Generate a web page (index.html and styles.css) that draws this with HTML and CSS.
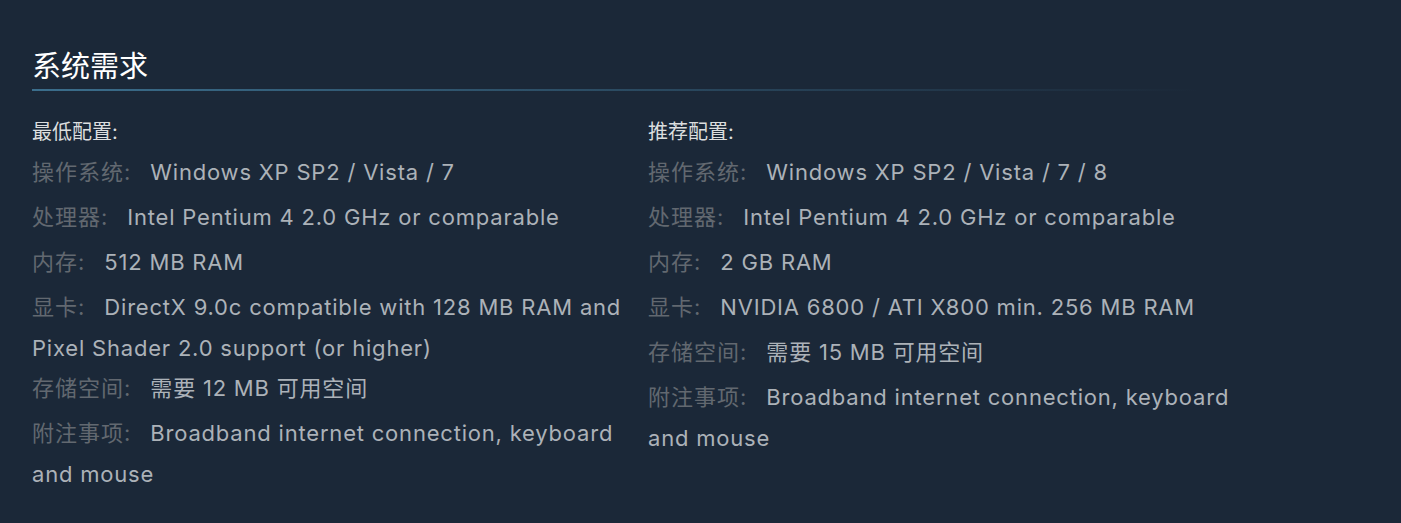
FILE: index.html
```html
<!DOCTYPE html>
<html lang="zh-CN">
<head>
  <meta charset="UTF-8" />
  <meta name="viewport" content="width=device-width, initial-scale=1.0"/>
  <title>系统需求</title>
  <link rel="stylesheet" href="styles.css">
</head>
<body>
  <div class="sysreq">
    <h2>系统需求</h2>

    <div class="columns">
      <div class="col">
        <p class="col-title">最低配置:</p>
        <ul>
          <li><span class="label">操作系统:</span> Windows XP SP2 / Vista / 7</li>
          <li><span class="label">处理器:</span> Intel Pentium 4 2.0 GHz or comparable</li>
          <li><span class="label">内存:</span> 512 MB RAM</li>
          <li><span class="label">显卡:</span> DirectX 9.0c compatible with 128 MB RAM and Pixel Shader 2.0 support (or higher)</li>
          <li><span class="label">存储空间:</span> 需要 12 MB 可用空间</li>
          <li><span class="label">附注事项:</span> Broadband internet connection, keyboard and mouse</li>
        </ul>
      </div>

      <div class="col">
        <p class="col-title">推荐配置:</p>
        <ul>
          <li><span class="label">操作系统:</span> Windows XP SP2 / Vista / 7 / 8</li>
          <li><span class="label">处理器:</span> Intel Pentium 4 2.0 GHz or comparable</li>
          <li><span class="label">内存:</span> 2 GB RAM</li>
          <li><span class="label">显卡:</span> NVIDIA 6800 / ATI X800 min. 256 MB RAM</li>
          <li><span class="label">存储空间:</span> 需要 15 MB 可用空间</li>
          <li><span class="label">附注事项:</span> Broadband internet connection, keyboard and mouse</li>
        </ul>
      </div>
    </div>
  </div>
</body>
</html>
```

FILE: styles.css
```css
body {
  margin: 0;
  background-color: #1b2838;
  font-family: "Inter", "Noto Sans CJK SC", sans-serif;
  color: #acb2b8;
}

.sysreq {
  width: 1216px;
  padding: 49px 0 0 32px;
}

h2 {
  margin: 0;
  font-size: 29px;
  font-weight: normal;
  line-height: 36px;
  color: #ffffff;
  background-image: linear-gradient(to right, #3b6e8c 0%, rgba(59, 110, 140, 0) 96%);
  background-repeat: no-repeat;
  background-size: 100% 2px;
  background-position: left bottom;
  padding-bottom: 6px;
}

.columns {
  display: grid;
  grid-template-columns: 600px 600px;
  column-gap: 16px;
  margin-top: 28px;
}

.col-title {
  margin: 0 0 5px;
  font-size: 20px;
  line-height: 26px;
  color: #dcdedf;
}

ul {
  list-style: none;
  margin: 0;
  padding: 0;
}

li {
  font-size: 22px;
  line-height: 36px;
  letter-spacing: 0.8px;
}

.label {
  color: #626870;
  margin-right: 12px;
  letter-spacing: 1px;
  line-height: 45px;
}
```
